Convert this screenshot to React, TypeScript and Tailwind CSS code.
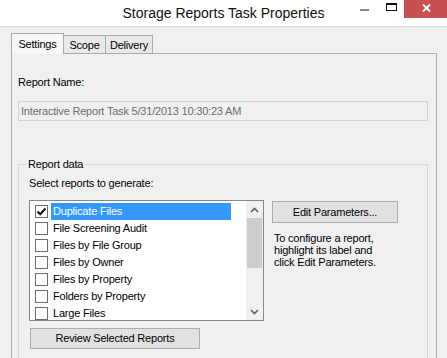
import React from 'react';

const reports = [
  { name: 'Duplicate Files', checked: true },
  { name: 'File Screening Audit', checked: false },
  { name: 'Files by File Group', checked: false },
  { name: 'Files by Owner', checked: false },
  { name: 'Files by Property', checked: false },
  { name: 'Folders by Property', checked: false },
  { name: 'Large Files', checked: false },
];

const CheckBox: React.FC<{ checked: boolean }> = ({ checked }) => (
  <div className="mt-[2px] ml-[5px] w-[13px] h-[13px] shrink-0 border border-[#6e6e6e] bg-white flex items-center justify-center">
    {checked && (
      <svg width="11" height="11" viewBox="0 0 11 11">
        <path d="M1.5 5.5 L4.2 8.2 L9.5 2.5" stroke="#111" strokeWidth="2" fill="none" />
      </svg>
    )}
  </div>
);

const App: React.FC = () => {
  return (
    <div className="w-[447px] h-[358px] overflow-hidden bg-[#f0f0f0] flex flex-col font-['Liberation_Sans',Arial,sans-serif] text-black">
      {/* title bar */}
      <div className="h-[27px] shrink-0 bg-white border-b border-[#dedede] grid grid-cols-[1fr_auto_1fr]">
        <div />
        <div className="text-[14px] leading-[26px] text-[#111]">Storage Reports Task Properties</div>
        <div className="flex justify-end items-start">
          <div className="mt-[9px] w-[9px] h-[2px] bg-[#8a8a8a]" />
          <div className="ml-[17px] mt-[3px] w-[11px] h-[8px] border border-t-2 border-[#111]" />
          <div className="ml-[7px] w-[43px] h-[18px] bg-[#c75050] flex items-center justify-center">
            <svg width="9" height="8" viewBox="0 0 9 8" className="ml-[2px] -mt-[2px]">
              <path d="M1 0.5 L8 7.5 M8 0.5 L1 7.5" stroke="#fff" strokeWidth="1.8" />
            </svg>
          </div>
        </div>
      </div>

      <div className="flex-1 min-h-0 flex flex-col text-[11px] tracking-[-0.2px]">
        {/* tabs */}
        <div className="mt-[6px] ml-[11px] h-[21px] flex items-end">
          <div className="relative z-10 w-[53px] h-[21px] border-l border-t border-r border-[#acacac] bg-[#f7f7f7] flex items-center justify-center">
            Settings
          </div>
          <div className="w-[42px] h-[19px] border-t border-r border-[#acacac] bg-[#e9e9e9] flex items-center justify-center">
            Scope
          </div>
          <div className="w-[47px] h-[19px] border-t border-r border-[#acacac] bg-[#e9e9e9] flex items-center justify-center">
            Delivery
          </div>
        </div>

        {/* tab page */}
        <div className="-mt-px ml-[11px] w-[426px] flex-1 border-l border-t border-r border-[#acacac] pl-[6px] pr-[8px] flex flex-col">
          <div className="mt-[22px] leading-[13px]">Report Name:</div>
          <div className="mt-[12px] h-[20px] border border-[#d2d2d2] bg-[#f0f0f0] pl-[2px] leading-[18px] text-[#6d6d6d]">
            Interactive Report Task 5/31/2013 10:30:23 AM
          </div>

          {/* group box */}
          <div className="mt-[43px] flex-1 border-l border-t border-r border-[#d8d8d8] flex flex-col">
            <div className="-mt-[7px] ml-[7px] px-[2px] w-fit bg-[#f0f0f0] leading-[13px]">Report data</div>
            <div className="mt-[6px] ml-[10px] leading-[13px]">Select reports to generate:</div>

            <div className="mt-[10px] ml-[10px] flex items-start">
              <div className="w-[235px] h-[121px] border border-[#828790] bg-white flex">
                <div className="flex-1 pt-[2px] overflow-hidden">
                  {reports.map(r => (
                    <div key={r.name} className="h-[17px] flex items-start">
                      <CheckBox checked={r.checked} />
                      <div
                        className={
                          r.checked
                            ? 'ml-[3px] w-[180px] h-[17px] px-[2px] leading-[17px] bg-[#3399ff] text-white'
                            : 'ml-[3px] w-[180px] h-[17px] px-[2px] leading-[17px]'
                        }
                      >
                        {r.name}
                      </div>
                    </div>
                  ))}
                </div>
                <div className="w-[17px] shrink-0 bg-[#f0f0f0] flex flex-col">
                  <div className="h-[17px] flex items-center justify-center">
                    <svg width="9" height="6" viewBox="0 0 9 6">
                      <path d="M1 5 L4.5 1.5 L8 5" stroke="#606060" strokeWidth="1.6" fill="none" />
                    </svg>
                  </div>
                  <div className="mx-[1px] h-[50px] bg-[#cdcdcd]" />
                  <div className="flex-1" />
                  <div className="h-[17px] flex items-center justify-center">
                    <svg width="9" height="6" viewBox="0 0 9 6">
                      <path d="M1 1 L4.5 4.5 L8 1" stroke="#606060" strokeWidth="1.6" fill="none" />
                    </svg>
                  </div>
                </div>
              </div>

              <div className="ml-[8px] flex flex-col">
                <div className="mt-[1px] w-[126px] h-[22px] border border-[#adadad] bg-[#e1e1e1] flex items-center justify-center">
                  Edit Parameters...
                </div>
                <div className="mt-[9px] ml-[2px] leading-[12px]">
                  To configure a report,
                  <br />
                  highlight its label and
                  <br />
                  click Edit Parameters.
                </div>
              </div>
            </div>

            <div className="mt-[7px] ml-[11px] w-[170px] h-[21px] border border-[#adadad] bg-[#e1e1e1] flex items-center justify-center">
              Review Selected Reports
            </div>
          </div>
        </div>
      </div>
    </div>
  );
};

export default App;
